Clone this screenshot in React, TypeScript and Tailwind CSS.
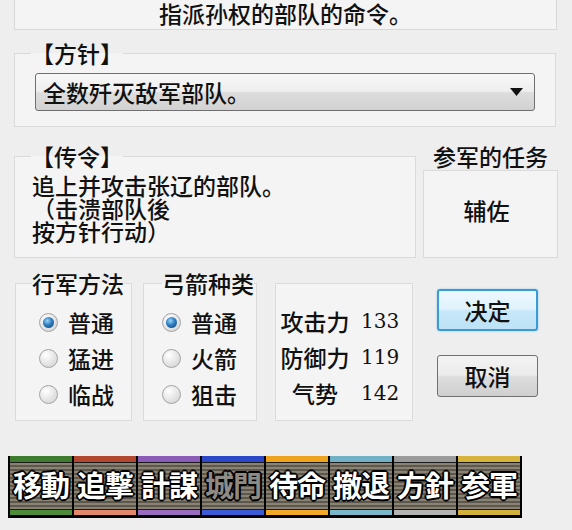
const commands = [
  { label: '移動', top: 'bg-[#3f7b2e]', bottom: 'bg-[#4d8c39]', text: 'text-white' },
  { label: '追撃', top: 'bg-[#b4472f]', bottom: 'bg-[#e4886c]', text: 'text-white' },
  { label: '計謀', top: 'bg-[#8c5db6]', bottom: 'bg-[#9a6cc1]', text: 'text-white' },
  { label: '城門', top: 'bg-[#2c48c8]', bottom: 'bg-[#3a5bd6]', text: 'text-[#8e8a84]' },
  { label: '待命', top: 'bg-[#f0a31c]', bottom: 'bg-[#f1a927]', text: 'text-white' },
  { label: '撤退', top: 'bg-[#72b1c5]', bottom: 'bg-[#7ab8cb]', text: 'text-white' },
  { label: '方針', top: 'bg-[#9b9b9b]', bottom: 'bg-[#b3b3b3]', text: 'text-white' },
  { label: '参軍', top: 'bg-[#d6b33a]', bottom: 'bg-[#d3b03d]', text: 'text-white' },
]

const stats = [
  { label: '攻击力', value: '133' },
  { label: '防御力', value: '119' },
  { label: '气势', value: '142' },
]

function Radio({ label, checked }: { label: string; checked?: boolean }) {
  return (
    <div className="flex items-center h-[36px]">
      <div className="w-[19px] h-[19px] rounded-full border border-[#a3a3a3] bg-[radial-gradient(circle_at_35%_30%,#ffffff_0%,#e9e9e9_45%,#cfcfcf_100%)] flex items-center justify-center">
        {checked && (
          <div className="w-[11px] h-[11px] rounded-full bg-[radial-gradient(circle_at_40%_35%,#9bd6f7_0%,#2d7cc0_45%,#0f3f78_100%)]" />
        )}
      </div>
      <span className="ml-[10px]">{label}</span>
    </div>
  )
}

export default function App() {
  return (
    <div
      className="w-[572px] h-[530px] overflow-hidden bg-[#eeeeee] text-[#111111] text-[23px] leading-[24px] font-medium"
      style={{ fontFamily: '"Noto Sans CJK SC", "Noto Sans", sans-serif' }}
    >
      {/* title */}
      <div className="ml-[14px] w-[543px] h-[30px] border-x border-b border-[#d8d8d8] bg-[#f4f4f4] flex justify-center">
        <span className="leading-[26px]">指派孙权的部队的命令。</span>
      </div>

      {/* 方针 */}
      <fieldset className="ml-[14px] mt-[11px] w-[542px] h-[86px] border border-[#dadada] bg-[#f4f4f4]">
        <legend className="ml-[16px] leading-[24px]">【方针】</legend>
        <div className="ml-[20px] mt-[8px] w-[500px] h-[38px] rounded-[3px] border border-[#6f6f6f] bg-[linear-gradient(180deg,#f8f8f8_0%,#eeeeee_48%,#dddddd_52%,#d2d2d2_100%)] flex items-center justify-between pl-[7px] pr-[11px]">
          <span>全数歼灭敌军部队。</span>
          <svg width="13" height="8" viewBox="0 0 13 8">
            <path d="M0 0 H13 L6.5 8 Z" fill="#111" />
          </svg>
        </div>
      </fieldset>

      {/* 传令 + 参军 */}
      <div className="flex items-start ml-[14px] mt-[17px]">
        <fieldset className="w-[402px] h-[114px] border border-[#dadada] bg-[#f4f4f4]">
          <legend className="ml-[16px] leading-[24px]">【传令】</legend>
          <p className="ml-[17px] mt-[6px] leading-[23px]">
            追上并攻击张辽的部队。
            <br />
            （击溃部队後
            <br />
            按方针行动）
          </p>
        </fieldset>
        <div className="ml-[7px] w-[135px] flex flex-col items-center">
          <span className="leading-[24px]">参军的任务</span>
          <div className="mt-[2px] w-[135px] h-[88px] border border-[#dadada] bg-[#f4f4f4] flex justify-center pt-[27px]">
            <span className="-ml-[8px]">辅佐</span>
          </div>
        </div>
      </div>

      {/* options row */}
      <div className="flex items-start ml-[15px] mt-[13px]">
        <fieldset className="w-[117px] h-[150px] border border-[#dadada] bg-[#f4f4f4]">
          <legend className="ml-[16px] leading-[24px]">行军方法</legend>
          <div className="mt-[9px] pl-[23px]">
            <Radio label="普通" checked />
            <Radio label="猛进" />
            <Radio label="临战" />
          </div>
        </fieldset>
        <fieldset className="ml-[11px] w-[114px] h-[150px] border border-[#dadada] bg-[#f4f4f4]">
          <legend className="ml-[18px] leading-[24px]">弓箭种类</legend>
          <div className="mt-[9px] pl-[18px]">
            <Radio label="普通" checked />
            <Radio label="火箭" />
            <Radio label="狙击" />
          </div>
        </fieldset>
        <div className="ml-[18px] mt-[12px] w-[138px] h-[138px] border border-[#dadada] bg-[#f4f4f4] pt-[19px] pl-[4px]">
          {stats.map((s) => (
            <div key={s.label} className="flex items-center h-[36px]">
              <span className="w-[70px] text-center">{s.label}</span>
              <span
                className="ml-[11px] text-[20px] font-normal"
                style={{ fontFamily: '"DejaVu Serif", serif' }}
              >
                {s.value}
              </span>
            </div>
          ))}
        </div>
        <div className="ml-[24px] mt-[18px] w-[101px] flex flex-col gap-[24px]">
          <button className="h-[42px] rounded-[3px] border-2 border-[#3b9bd4] bg-[linear-gradient(180deg,#eef8fe_0%,#dff2fc_48%,#c8e8f9_52%,#bde2f6_100%)] shadow-[0_0_2px_#7cc4ee] flex items-center justify-center">
            决定
          </button>
          <button className="h-[42px] rounded-[3px] border border-[#707070] bg-[linear-gradient(180deg,#f3f3f3_0%,#ebebeb_48%,#dddddd_52%,#cfcfcf_100%)] flex items-center justify-center">
            取消
          </button>
        </div>
      </div>

      {/* command bar */}
      <div className="ml-[8px] mt-[35px] flex w-fit border-l-2 border-black">
        {commands.map((c) => (
          <div key={c.label} className="w-[64px] h-[62px] flex flex-col border-r-2 border-black">
            <div className={`h-[6px] ${c.top}`} />
            <div className="h-[1px] bg-[#1b1b1b]" />
            <div className="h-[46px] bg-[repeating-linear-gradient(180deg,#8a8373_0px,#8a8373_2px,#5d584e_2px,#5d584e_4px)] flex items-center justify-center overflow-hidden">
              <span
                className={`${c.text} text-[29px] leading-none font-bold tracking-[-1px] -mt-[3px] [text-shadow:-2px_0_0_#000,2px_0_0_#000,0_-2px_0_#000,0_2px_0_#000,-1px_-1px_0_#000,1px_1px_0_#000,-1px_1px_0_#000,1px_-1px_0_#000]`}
                style={{ fontFamily: '"Noto Sans CJK JP", sans-serif' }}
              >
                {c.label}
              </span>
            </div>
            <div className="h-[1px] bg-[#1b1b1b]" />
            <div className={`h-[5px] ${c.bottom}`} />
            <div className="h-[3px] bg-black" />
          </div>
        ))}
      </div>
    </div>
  )
}
